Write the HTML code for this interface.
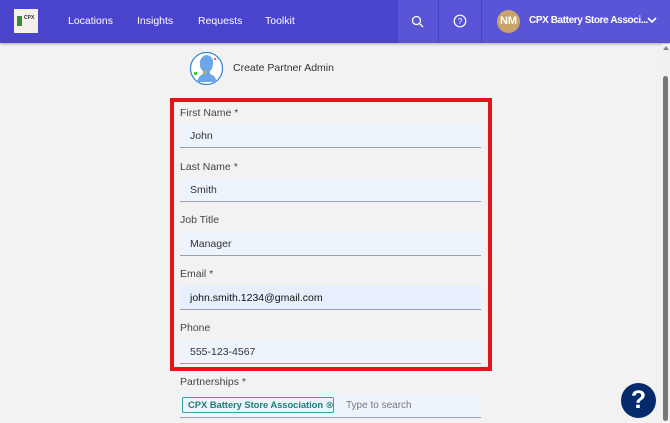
<!DOCTYPE html><html><head><style>
body{margin:0;width:670px;height:423px;overflow:hidden;background:#f2f2f2;font-family:"Liberation Sans",sans-serif;position:relative}
div{white-space:nowrap}
.hdr{position:absolute;left:0;top:0;width:670px;height:43px;background:#4a43cc;box-shadow:0 1px 3px rgba(0,0,0,.3)}
.nav{position:absolute;top:15px;color:#fff;font-size:10.5px}
.rs{position:absolute;top:0;height:43px;background:#5a55d6}
.lbl{position:absolute;left:180px;font-size:10.5px;color:#444}
.inp{position:absolute;left:180px;width:301px;height:24px;background:#eef4fc;border-bottom:1px solid #9aa0a8;font-size:10.5px;color:#333;box-sizing:border-box;padding:6px 0 0 10px}
</style></head><body>
<div class="hdr">
<div style="position:absolute;left:14px;top:9px;width:24px;height:24px;background:#f3f0ea"><div style="position:absolute;left:3px;top:7px;width:5px;height:10px;background:#3a8a3a"></div><div style="position:absolute;left:10px;top:6px;font-size:5px;font-weight:bold;color:#333">CPX</div></div>
<div class="nav" style="left:68px">Locations</div>
<div class="nav" style="left:137px">Insights</div>
<div class="nav" style="left:198px">Requests</div>
<div class="nav" style="left:265px">Toolkit</div>
<div class="rs" style="left:398px;width:40px"></div>
<div class="rs" style="left:439px;width:42px"></div>
<div class="rs" style="left:482px;width:188px"></div>
<svg style="position:absolute;left:411px;top:15px" width="13" height="13" viewBox="0 0 13 13"><circle cx="5.5" cy="5.5" r="4" fill="none" stroke="#fff" stroke-width="1.3"/><line x1="8.5" y1="8.5" x2="12" y2="12" stroke="#fff" stroke-width="1.3"/></svg>
<svg style="position:absolute;left:453px;top:14px" width="14" height="14" viewBox="0 0 14 14"><circle cx="7" cy="7" r="5.8" fill="none" stroke="#fff" stroke-width="1.2"/><text x="7" y="10.2" font-size="8.5" fill="#fff" text-anchor="middle" font-family="Liberation Sans">?</text></svg>
<div style="position:absolute;left:497px;top:10px;width:23px;height:23px;border-radius:50%;background:#c9a46a;color:#fff;font-size:11px;font-weight:bold;text-align:center;line-height:23px">NM</div>
<div style="position:absolute;left:529px;top:15px;color:#fff;font-size:10px;font-weight:bold;letter-spacing:-0.4px">CPX Battery Store Associ...</div>
<svg style="position:absolute;left:647px;top:17px" width="10" height="7"><polyline points="1,1 5,5 9,1" fill="none" stroke="#fff" stroke-width="1.6"/></svg>
</div>
<svg style="position:absolute;left:189px;top:51px" width="35" height="35" viewBox="0 0 35 35"><circle cx="17.5" cy="17.5" r="16" fill="#fff" stroke="#3a8ad8" stroke-width="1.3"/><path d="M8 31 Q10 24 14 23 L14 20 Q10 17 11 10 Q13 4 18 4 Q24 5 24 11 Q24 18 21 20 L21 23 Q26 24 28 31 Z" fill="#6aa6e8"/><rect x="25" y="7" width="2" height="2" fill="#e66"/><rect x="5" y="21" width="3" height="3" fill="#4c4"/><circle cx="16" cy="21" r="1.3" fill="#e8b020"/></svg>
<div style="position:absolute;left:233px;top:62px;font-size:10.5px;color:#333">Create Partner Admin</div>
<div style="position:absolute;left:170px;top:98px;width:314px;height:265px;border:4px solid #e3151a"></div>
<div class="lbl" style="top:107px">First Name *</div><div class="inp" style="top:124px">John</div>
<div class="lbl" style="top:161px">Last Name *</div><div class="inp" style="top:178px">Smith</div>
<div class="lbl" style="top:214px">Job Title</div><div class="inp" style="top:232px">Manager</div>
<div class="lbl" style="top:268px">Email *</div><div class="inp" style="top:286px;background:#e7effc;color:#111">john.smith.1234@gmail.com</div>
<div class="lbl" style="top:322px">Phone</div><div class="inp" style="top:340px">555-123-4567</div>
<div class="lbl" style="top:376px">Partnerships *</div>
<div class="inp" style="top:394px;height:24px;padding:0"></div>
<div style="position:absolute;left:182px;top:397px;width:152px;height:16px;border:1px solid #3aa39a;border-radius:2px;font-size:9.5px;font-weight:bold;color:#1f7f78;line-height:15px;padding-left:5px;box-sizing:border-box;overflow:hidden;letter-spacing:-0.1px">CPX Battery Store Association <span style="font-weight:normal">⊗</span></div>
<div style="position:absolute;left:346px;top:400px;font-size:10px;color:#777">Type to search</div>
<div style="position:absolute;left:662px;top:44px;width:8px;height:379px;background:#f0f0f0"></div>
<div style="position:absolute;left:663px;top:76px;width:5px;height:345px;background:#777;border-radius:3px"></div>
<div style="position:absolute;left:663px;top:46px;width:0;height:0;border-left:3px solid transparent;border-right:3px solid transparent;border-bottom:4px solid #888"></div>
<div style="position:absolute;left:621px;top:383px;width:35px;height:35px;border-radius:50%;background:#032a6c;color:#fff;font-size:25px;font-weight:bold;text-align:center;line-height:35px">?</div>
</body></html>
